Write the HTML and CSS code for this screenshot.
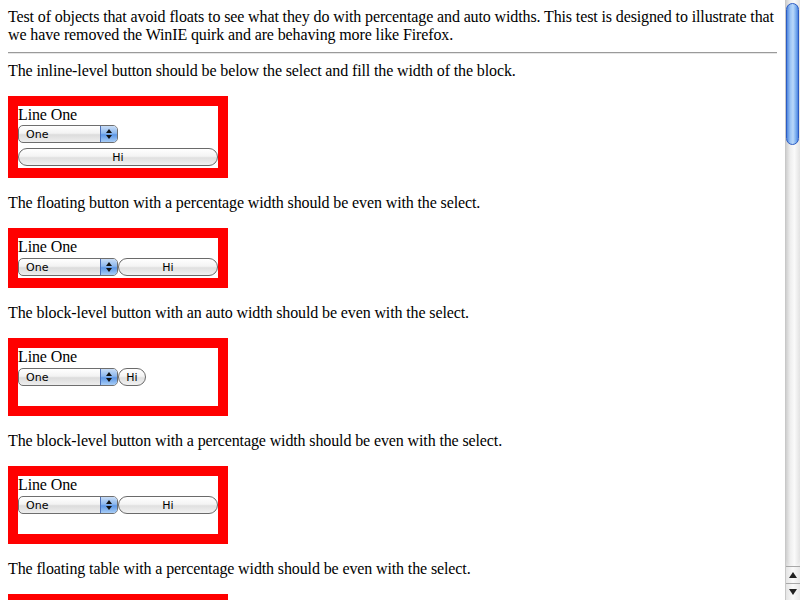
FILE: index.html
```html
<!DOCTYPE html>
<html>
<head>
<meta charset="utf-8">
<link rel="stylesheet" href="styles.css">
</head>
<body>
<div class="page">
  <div class="content">
    <div class="intro">Test of objects that avoid floats to see what they do with percentage and auto widths. This test is designed to illustrate that we have removed the WinIE quirk and are behaving more like Firefox.</div>
    <div class="rule"></div>

    <p class="desc">The inline-level button should be below the select and fill the width of the block.</p>
    <div class="box box1">
      <div class="line">Line One</div>
      <div class="row r1">
        <span class="select"><span class="sel-text">One</span><span class="sel-arrow"><i class="up"></i><i class="down"></i></span></span>
      </div>
      <div class="row r1b">
        <span class="btn full">Hi</span>
      </div>
    </div>

    <p class="desc">The floating button with a percentage width should be even with the select.</p>
    <div class="box box2">
      <div class="line">Line One</div>
      <div class="row r2">
        <span class="select"><span class="sel-text">One</span><span class="sel-arrow"><i class="up"></i><i class="down"></i></span></span><span class="btn half">Hi</span>
      </div>
    </div>

    <p class="desc">The block-level button with an auto width should be even with the select.</p>
    <div class="box box3">
      <div class="line">Line One</div>
      <div class="row r2">
        <span class="select"><span class="sel-text">One</span><span class="sel-arrow"><i class="up"></i><i class="down"></i></span></span><span class="btn small">Hi</span>
      </div>
    </div>

    <p class="desc">The block-level button with a percentage width should be even with the select.</p>
    <div class="box box4">
      <div class="line">Line One</div>
      <div class="row r2">
        <span class="select"><span class="sel-text">One</span><span class="sel-arrow"><i class="up"></i><i class="down"></i></span></span><span class="btn half">Hi</span>
      </div>
    </div>

    <p class="desc">The floating table with a percentage width should be even with the select.</p>
    <div class="box box5"></div>
  </div>

  <div class="scrollbar">
    <div class="track">
      <div class="thumb"></div>
    </div>
    <div class="arrow arrow-up"><i></i></div>
    <div class="arrow arrow-down"><i></i></div>
  </div>
</div>
</body>
</html>
```

FILE: styles.css
```css
html, body {
  margin: 0;
  padding: 0;
  overflow: hidden;
  background: #fff;
}

.page {
  display: flex;
  width: 800px;
  height: 600px;
  overflow: hidden;
}

.content {
  width: 769px;
  padding: 8px;
  font-family: "Liberation Serif", "Times New Roman", serif;
  font-size: 16px;
  line-height: 18px;
  letter-spacing: -0.12px;
  color: #000;
  flex: none;
}

.intro {
  margin: 0;
}

.rule {
  margin: 8px 0;
  height: 1px;
  background: #9a9a9a;
  border-bottom: 1px solid #e6e6e6;
}

.desc {
  margin: 0;
  height: 18px;
}

.box {
  width: 200px;
  border: 10px solid #ff0000;
  margin: 16px 0;
  background: #fff;
}

.box1 { height: 62px; }
.box2 { height: 40px; }
.box3 { height: 58px; }
.box4 { height: 58px; }
.box5 { height: 40px; }

.line {
  height: 18px;
}

.row {
  display: flex;
  align-items: flex-start;
  letter-spacing: 0;
}

.r1 { margin-top: 1px; }
.r1b { margin-top: 5px; }
.r2 { margin-top: 2px; }

.select {
  box-sizing: border-box;
  width: 100px;
  height: 18px;
  border: 1px solid #6e6e6e;
  border-radius: 5px;
  display: flex;
  overflow: hidden;
  background: linear-gradient(#ffffff 0%, #f3f3f3 45%, #dcdcdc 55%, #eeeeee 100%);
  font-family: "DejaVu Sans", "Liberation Sans", sans-serif;
  font-size: 11px;
  line-height: 17px;
  flex: none;
}

.sel-text {
  flex: 1;
  padding-left: 7px;
  color: #000;
}

.sel-arrow {
  width: 16px;
  position: relative;
  border-left: 1px solid #4a6fb8;
  background: linear-gradient(#c9ddf6 0%, #8db8ee 45%, #5d97e6 55%, #a8cdf6 100%);
}

.sel-arrow .up,
.sel-arrow .down {
  position: absolute;
  left: 5px;
  width: 0;
  height: 0;
  border-left: 3px solid transparent;
  border-right: 3px solid transparent;
}

.sel-arrow .up {
  top: 3px;
  border-bottom: 4px solid #111;
}

.sel-arrow .down {
  top: 9px;
  border-top: 4px solid #111;
}

.btn {
  box-sizing: border-box;
  height: 18px;
  border: 1px solid #6a6a6a;
  border-radius: 9px;
  background: linear-gradient(#ffffff 0%, #f4f4f4 45%, #e0e0e0 55%, #f2f2f2 100%);
  font-family: "DejaVu Sans", "Liberation Sans", sans-serif;
  font-size: 11px;
  line-height: 17px;
  text-align: center;
  color: #000;
  flex: none;
}

.btn.full { width: 200px; }
.btn.half { width: 100px; }
.btn.small { width: 28px; }

.scrollbar {
  width: 15px;
  height: 600px;
  flex: none;
  display: flex;
  flex-direction: column;
  background: linear-gradient(90deg, #d6d6d6 0%, #f2f2f2 30%, #ffffff 55%, #eaeaea 100%);
  border-left: 1px solid #c8c8c8;
  box-sizing: border-box;
}

.track {
  flex: 1;
  position: relative;
  border-bottom-left-radius: 7px;
  border-bottom-right-radius: 7px;
  background: linear-gradient(90deg, #cfcfcf 0%, #eeeeee 30%, #fafafa 60%, #e2e2e2 100%);
}

.thumb {
  position: absolute;
  left: 0;
  top: 3px;
  width: 13px;
  height: 142px;
  box-sizing: border-box;
  border: 1px solid #2c5cc3;
  border-radius: 7px;
  background: linear-gradient(90deg, #4f86df 0%, #9cc4f4 30%, #b9d8fa 55%, #7eb0ef 80%, #4c84e0 100%);
}

.arrow {
  height: 16px;
  position: relative;
  border-top: 1px solid #a8a8a8;
  background: linear-gradient(90deg, #e4e4e4 0%, #fafafa 50%, #e8e8e8 100%);
}

.arrow i {
  position: absolute;
  left: 3px;
  top: 5px;
  width: 0;
  height: 0;
  border-left: 4px solid transparent;
  border-right: 4px solid transparent;
}

.arrow-up i {
  border-bottom: 6px solid #222;
}

.arrow-down i {
  border-top: 6px solid #222;
}
```
